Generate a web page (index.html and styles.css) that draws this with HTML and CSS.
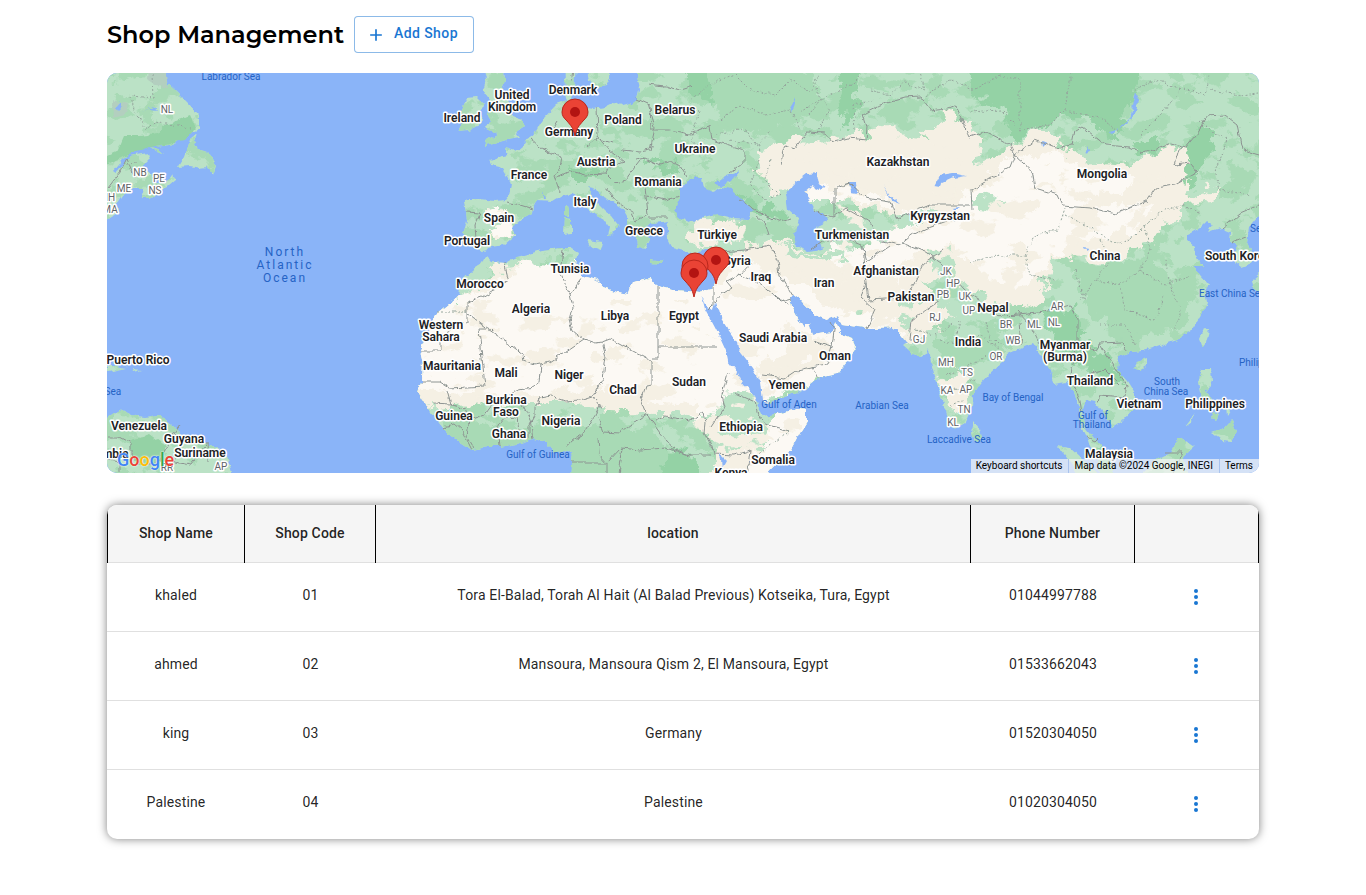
FILE: index.html
```html
<!DOCTYPE html>
<html lang="en">
<head>
<meta charset="utf-8">
<meta name="viewport" content="width=device-width, initial-scale=1">
<title>Shop Management</title>
<link rel="stylesheet" href="styles.css">
</head>
<body>
<main class="page">
  <header class="toolbar">
    <h1 class="title">Shop Management</h1>
    <button class="add-button" type="button">
      <svg class="add-icon" viewBox="0 0 24 24" aria-hidden="true"><path d="M19 13h-6v6h-2v-6H5v-2h6V5h2v6h6v2z"/></svg>
      <span class="add-label">Add Shop</span>
    </button>
  </header>

  <section class="map" aria-label="Map of shops">
    <svg class="map-canvas" viewBox="107 73 1152 400" preserveAspectRatio="xMidYMid slice">
      <defs>
        <filter id="coast" filterUnits="userSpaceOnUse" x="97" y="63" width="1172" height="420">
          <feTurbulence type="fractalNoise" baseFrequency="0.12" numOctaves="3" seed="4" result="n"/>
          <feDisplacementMap in="SourceGraphic" in2="n" scale="6" xChannelSelector="R" yChannelSelector="G"/>
        </filter>
        <filter id="rough" filterUnits="userSpaceOnUse" x="97" y="63" width="1172" height="420">
          <feTurbulence type="fractalNoise" baseFrequency="0.07" numOctaves="4" seed="9" result="n"/>
          <feDisplacementMap in="SourceGraphic" in2="n" scale="24" xChannelSelector="R" yChannelSelector="G"/>
        </filter>
        <filter id="woods" filterUnits="userSpaceOnUse" x="97" y="63" width="1172" height="420" color-interpolation-filters="sRGB">
          <feTurbulence type="fractalNoise" baseFrequency="0.035 0.05" numOctaves="5" seed="21"/>
          <feColorMatrix values="0 0 0 0 0  0 0 0 0 0  0 0 0 0 0  24 0 0 0 -12.4" result="m"/>
          <feComposite in="SourceGraphic" in2="m" operator="in"/>
        </filter>
        <filter id="steppe" filterUnits="userSpaceOnUse" x="97" y="63" width="1172" height="420" color-interpolation-filters="sRGB">
          <feTurbulence type="fractalNoise" baseFrequency="0.03 0.06" numOctaves="4" seed="7"/>
          <feColorMatrix values="0 0 0 0 0  0 0 0 0 0  0 0 0 0 0  0 24 0 0 -13.8" result="m"/>
          <feComposite in="SourceGraphic" in2="m" operator="in"/>
        </filter>
        <path id="mainland" d="M565 60L566 80 565 93 567 101 556 105 545 117 540 124 535 133 527 138 522 146 516 151 505 148 507 155 498 157 490 160 492 165 503 168 509 178 511 185 509 196 506 200 495 201 480 199 467 199 464 203 466 212 467 220 463 235 465 243 477 247 484 252 487 248 504 245 511 239 515 235 511 228 522 219 533 213 534 206 538 200 552 201 562 195 572 193 580 202 588 210 597 216 604 220 610 228 608 236 612 235 615 228 619 226 612 217 605 211 597 203 592 193 587 187 595 189 607 199 623 209 627 216 627 225 635 235 638 247 647 248 650 239 645 228 650 223 663 222 668 221 666 226 668 238 673 248 687 252 697 254 706 249 713 249 718 256 716 272 716 283 711 289 700 292 687 291 673 290 658 286 647 278 633 282 629 294 617 292 603 287 597 280 582 276 582 268 575 263 578 253 570 248 563 248 543 250 517 257 507 263 490 262 485 257 480 265 472 270 460 283 458 295 447 305 437 313 430 327 420 350 423 363 422 382 418 392 425 403 433 415 442 427 452 437 472 450 487 447 500 447 520 443 533 439 547 442 553 452 563 451 572 453 571 463 570 490 758 490 770 470 780 460 790 452 800 433 807 422 807 410 797 409 777 414 763 416 757 406 762 401 770 402 790 395 807 388 820 378 837 374 847 362 856 347 852 338 840 333 836 323 832 332 820 334 812 335 809 323 805 323 804 328 798 318 792 307 790 298 797 296 805 305 815 315 827 320 837 316 842 325 857 327 873 328 893 327 900 333 907 342 903 345 913 354 920 356 927 352 929 348 931 363 937 383 943 403 948 417 955 429 965 423 972 407 973 395 980 384 987 376 1003 361 1007 354 1020 349 1033 344 1042 357 1050 370 1053 384 1067 382 1073 390 1080 407 1080 423 1087 437 1090 447 1098 460 1100 490 1115 490 1112 462 1103 447 1093 437 1085 427 1082 412 1086 400 1095 402 1103 413 1112 427 1123 420 1135 407 1135 393 1127 380 1117 369 1118 358 1130 352 1142 351 1157 347 1177 340 1192 330 1200 317 1207 303 1205 292 1209 285 1200 275 1194 266 1203 266 1196 257 1195 247 1187 240 1187 235 1200 228 1207 221 1213 225 1209 232 1220 228 1230 232 1229 241 1237 244 1235 262 1241 267 1252 263 1252 255 1247 242 1249 228 1262 212 1280 200 1280 60 641 60 637 75 640 90 638 99 633 103 622 106 615 102 605 107 593 109 583 107 575 103 571 98 574 86 577 60Z"/>
        <g id="islands">
          <path d="M482 60L486 80 483 90 490 100 495 108 487 114 490 122 486 129 497 134 487 140 485 146 497 143 507 140 520 138 516 133 525 127 522 120 513 117 509 104 502 92 505 78 502 60Z"/>
          <path d="M467 98L477 97 483 103 482 112 480 124 468 130 458 131 463 122 459 116 463 108Z"/>
          <path d="M586 60L590 80 595 88 606 86 610 77 611 60Z"/>
          <path d="M565 205L569 208 569 216 565 215ZM565 218L571 219 571 233 564 234ZM587 240L603 242 601 250 590 246ZM650 260L664 262 662 264 651 263ZM700 263L710 260 705 266Z"/>
          <path d="M973 420L979 428 981 439 974 441 971 432Z"/>
          <path d="M1204 328L1209 330 1206 342 1202 347 1199 339ZM1137 362L1146 359 1146 366 1140 370 1134 367Z"/>
          <path d="M1202 369L1211 369 1212 380 1206 394 1216 402 1222 408 1212 406 1201 398 1198 382ZM1226 403L1230 411 1227 416ZM1214 412L1220 414 1216 421 1212 418ZM1212 433L1224 429 1232 420 1236 432 1231 442 1223 441ZM1185 427L1196 413 1192 422Z"/>
          <path d="M1143 473L1158 458 1170 452 1180 437 1194 447 1183 457 1190 480 1143 480ZM1058 446L1070 448 1083 460 1100 480 1080 480 1070 462Z"/>
          <path d="M1252 280L1262 271 1262 292 1254 290ZM1236 263L1250 262 1245 266Z"/>
          <path d="M97 60L163 60 167 83 177 92 188 103 199 115 199 130 188 134 177 142 163 145 138 147 126 156 113 172 116 174 130 156 148 153 150 160 143 167 152 174 155 183 165 184 172 174 175 180 163 190 150 198 142 198 145 188 133 188 122 196 117 204 118 212 107 219 97 219ZM198 133L190 140 184 157 178 167 190 166 200 168 207 167 213 175 216 166 208 152 200 150 194 145ZM150 147L158 149 165 154 158 152Z"/>
          <path d="M97 425L110 416 120 410 130 415 145 417 160 415 172 425 182 435 200 443 217 447 228 458 234 480 97 480ZM107 366L116 366 127 368 112 371 107 372ZM133 369L142 370 134 372Z"/>
        </g>
        <clipPath id="land"><use href="#mainland"/></clipPath>
      </defs>

      <rect class="sea" x="97" y="63" width="1172" height="420"/>
      <g filter="url(#coast)">
        <use href="#mainland" class="green"/>
        <use href="#islands" class="green"/>
        <g clip-path="url(#land)">
          <g filter="url(#woods)">
            <path class="green-mid" d="M97 63H1270V480H97Z"/>
          </g>
          <g filter="url(#rough)">
            <path class="green-deep" d="M680 60L690 90 720 110 735 95 760 85 790 75 800 60ZM845 60L838 95 842 130 852 120 862 75 870 60ZM960 60L975 95 1000 105 1015 140 1050 125 1080 115 1115 140 1130 105 1140 60ZM1040 310L1075 305 1080 340 1110 360 1125 385 1105 380 1075 360 1055 340ZM1195 125L1215 135 1205 160 1190 185 1175 190ZM570 165L600 170 595 180 570 180ZM640 155L680 165 675 175 655 168ZM735 195L790 215 785 222 745 210ZM1070 455L1130 450 1130 475 1090 475ZM620 455L690 450 700 480 600 480ZM1130 138L1160 140 1155 155 1135 152Z"/>
            <path class="green-mid" d="M700 60L800 62 830 110 780 130 720 125ZM1070 265L1150 260 1195 300 1180 330 1120 335 1090 310ZM440 410L500 425 560 425 660 430 670 480 440 480ZM935 335L960 340 1000 330 1010 345 960 375 940 365Z"/>
            <path class="beige" d="M757 172L762 152 790 140 835 142 857 128 862 142 880 122 900 136 925 138 945 112 970 125 982 145 975 155 985 165 1012 145 1040 132 1055 132 1058 145 1075 154 1110 166 1150 158 1180 145 1194 158 1185 172 1188 195 1222 185 1212 206 1180 207 1160 235 1140 250 1110 262 1080 256 1060 258 1042 280 1048 300 1025 310 1000 306 985 298 962 285 952 268 930 275 920 300 950 310 955 320 935 330 905 345 880 345 700 480 745 480 800 480 830 440 880 380 860 300 850 330 700 415 640 412 560 404 500 404 410 410 410 300 455 305 480 285 500 268 570 262 600 270 700 285 718 262 735 252 770 238 800 252 850 250 880 250 905 245 915 232 900 215 860 205 800 190 780 195Z"/>
          </g>
          <g filter="url(#rough)">
            <path class="sand" d="M410 390L410 290 460 300 500 278 540 260 600 265 720 284 745 262 780 275 850 310 900 320 905 300 890 270 830 265 830 240 850 250 890 238 900 215 870 200 800 200 810 182 860 190 900 205 950 212 985 178 1020 155 1050 185 1100 205 1150 203 1130 230 1080 240 1050 260 1020 290 980 270 955 250 925 245 900 270 900 330 860 370 700 420 660 405 600 385 500 395ZM680 480L740 470 790 400 820 410 800 480ZM1005 160L1060 150 1090 175 1140 180 1120 195 1060 190Z"/>
            <path class="beige" d="M780 325L810 335 840 350 815 360 765 385 755 370 790 350ZM780 235L830 262 860 300 850 315 820 300 790 270ZM690 222L745 225 740 240 700 245 688 236ZM485 208L508 212 510 236 495 236 500 222 485 220ZM720 430L760 430 740 480 715 480ZM937 382L960 370 968 395 955 412 945 395ZM1190 200L1220 186 1215 202ZM640 400L700 405 700 415 640 412Z"/>
            <path class="sand" d="M488 208L500 207 500 220 512 224 504 236 492 232 498 222Z"/>
            <path class="green" d="M480 258L495 262 485 278 472 285 466 282ZM722 395L750 392 768 415 765 440 735 455 705 435ZM783 240L812 255 845 252 850 258 810 262 788 252ZM900 300L912 300 912 320 905 330 902 315ZM890 218L935 208 930 218 900 232ZM925 245L945 250 960 280 935 275ZM525 250L578 247 560 256 530 257ZM975 195L1005 202 1000 210 975 206Z"/>
          </g>
          <g filter="url(#steppe)">
            <path class="beige" d="M775 155L940 140 1000 175 1060 160 1170 170 1130 235 1050 250 1010 290 960 255 900 335H700V300H420V400H690V450H800V300H720L750 260 830 270 830 200Z"/>
          </g>
        </g>
        <g filter="url(#woods)"><use href="#islands" class="green-mid"/></g>
        <g class="green-deep">
          <path d="M107 165L125 156 150 147 185 140 196 128 190 115 165 125 158 134 140 136 124 136 118 150 107 155ZM130 440L150 434 165 445 160 465 140 465 131 455Z"/>
        </g>
        <path class="tundra" d="M150 60L164 60 168 88 157 86 148 80ZM112 100L128 104 125 115 113 118Z"/>
        <g class="sea">
          <path d="M690 178L702 178 704 187 712 191 722 187 731 189 743 200 753 210 748 219 733 218 717 214 703 217 690 222 679 217 675 211 680 199 680 190 687 182ZM713 183L727 175 739 171 731 181 722 186Z"/>
          <path d="M786 195L792 185 806 174 817 173 819 183 827 188 820 190 812 186 804 193 811 203 816 212 824 212 827 221 817 226 823 250 808 252 796 245 794 233 800 220 788 209Z"/>
          <path d="M702 297L708 308 713 311 715 301 719 315 727 328 737 342 738 350 752 368 760 382 762 400 764 406 757 403 755 395 743 385 738 373 728 360 726 350 720 337 712 322 705 309Z"/>
          <path d="M849 182L856 182 857 193 851 192ZM934 187L940 175 952 173 966 176 950 179 941 183 940 188ZM1108 131L1120 128 1130 118 1136 92 1140 95 1135 114 1124 126 1112 133ZM952 208L960 207 955 211ZM1086 146L1089 150 1087 156ZM1042 141L1047 143 1043 147ZM1083 248L1089 249 1088 252ZM883 185L890 195 900 203 892 200ZM790 108L797 96 792 114ZM115 108L121 101 122 107 117 112ZM143 112L154 106 157 110 149 109ZM543 191L545 198 543 198Z"/>
          <path d="M720 455L726 461 722 468Z"/>
        </g>
      </g>

      <g class="borders" filter="url(#coast)">
        <path d="M505 262L507 275 509 280 495 289 482 297 467 302 467 314 523 354 524 361 535 365 550 362 584 339 573 331 570 320 573 308 570 294 560 273 563 250M467 314V322L441 335V351H420M487 329H479L485 386 450 388 440 382 422 382M541 364L539 382 535 387 518 389 505 398 495 400 489 408M535 407L540 398 550 396 565 401 580 400 593 396 603 378 606 357 602 342 596 343 584 339M582 278L573 290 570 294M602 342L610 339 652 362V385L646 386 641 402 645 412 660 433 673 448 690 455 710 455M658 286V358H652M658 347H718"/>
        <path d="M447 391L451 405 466 409 470 420 484 415 489 408M433 404L451 405M442 427L455 424 462 430 472 450M470 420L467 436 474 448M500 447L498 425 505 417 518 418 522 440M528 439V428L535 415 535 407M522 403L530 420 533 439M566 448L572 441 582 435 597 412 600 405 594 397M598 418L603 432 620 433 647 413M598 437L599 454 607 463 621 448 640 450 665 448 691 455M571 463H607V473M622 448L617 480M655 420L665 416 690 421 703 412 705 423 704 432 711 445 713 454 735 455 750 450M728 373L722 395 725 407 711 428M735 393L755 402 758 414 765 424 789 431M750 450L748 466 752 480M762 375L785 378 797 370 826 364 831 347 813 341M812 366L818 379M715 302L722 294 732 288 727 282 740 275 752 262M738 275L760 284 774 296 790 305M775 296L781 302 791 299M713 287V305L708 310M832 347L834 330 830 322"/>
        <path d="M507 202L520 205 533 209M466 212L480 213 475 225 476 240M530 138L540 147 551 153 562 156 560 168 554 176 560 192M555 178L570 171 585 175 605 174 609 167 625 162 610 150 598 136 597 108M587 146L597 138 612 143M622 150L640 152 650 150 655 128 648 103M648 84L665 86 680 90 693 86M637 99L650 105 651 130M651 130L670 130 690 134 710 126 712 140 728 145 744 150 744 162 730 172M635 160L645 158 660 165 670 161 680 166 686 176M608 176L615 183 625 180 640 161M605 187L618 203 624 207 635 214M647 196L665 200 680 196M644 180L646 196 648 215 635 222 631 213M648 217H668M572 82L574 70M558 120L550 133"/>
        <path d="M781 165L783 150 786 145 795 148 807 132 825 133 833 142 848 138 866 140 867 127 863 114 880 105 905 98 920 97 930 110 948 108 955 105 970 137 985 132 1010 145 1015 155 1035 140 1055 148 1072 145 1075 130 1082 126 1105 145 1130 147 1142 153 1160 148 1170 144 1185 148 1200 130 1205 116 1225 115 1238 125 1243 150 1260 155M1015 155L1032 170 1035 188 1058 195 1063 206 1090 208 1115 214 1147 200 1155 188 1175 185 1198 172 1190 163 1175 165 1180 148M1015 155L1010 168 988 180 972 190 973 210M835 188L850 183 866 198 890 202 897 220 910 213 930 205 970 205M815 210L824 215 834 217V188M834 217L846 208 870 222 878 240 900 245 912 235 930 227 950 220 970 215M810 250L825 240 850 240 862 245 867 262 890 246M863 245L866 283 868 300 905 298 915 283 925 262 943 250M866 283L862 298 875 310 867 328M769 235L766 225 755 215M740 200L765 215 778 222 790 218M720 252L745 250 769 245 778 260 780 275 793 297M902 243L925 252 940 262 965 290 980 300 1000 316 1020 315 1045 312 1070 305 1078 320 1078 345M1018 312L1030 325 1040 345M1022 345L1020 322M1078 345L1072 363 1070 375 1080 400 1082 412M1078 345L1095 350 1100 343 1122 342 1125 350M1100 345L1110 360 1120 375 1127 385 1125 397 1100 395 1098 402M1088 375L1105 370 1120 385M1087 437L1095 441 1098 438M1222 228L1240 213 1259 205M1230 243L1246 237M910 340L912 320 925 310 940 300M1164 452H1182L1172 480"/>
        <path d="M108 188L120 172 127 158 132 170 134 178M107 437L120 437 131 443 131 455 145 465 160 460 170 440 180 425M107 460L120 462 120 473M180 445L175 462 190 465 207 442 208 462"/>
      </g>
      <g class="regions" filter="url(#coast)">
        <path d="M153 73L154 98 131 96 134 110 147 130 155 122 190 128M437 312H467M756 456L789 431M127 163L138 162"/>
        <path d="M690 100L710 85 735 75 750 90 775 95 790 80 810 92 820 75M720 120L740 105 765 115 790 110 800 130M760 150L745 130 715 135M770 160L765 180 780 195 765 200 750 185 760 160M815 88L830 110 815 135M820 100L850 85 860 75M870 90L890 95 905 82 925 90 920 73M855 130L853 105 875 100M925 95L950 80 975 90 1000 75 1020 80 1020 130 1000 110 970 112M1020 130L1050 125 1065 110 1100 118 1120 132M1065 110L1068 90 1072 73M1135 90L1155 80 1180 88 1165 110 1140 135M1180 88L1205 95 1210 75M1210 90L1240 95 1259 93M1200 120L1215 135 1228 140 1215 170 1220 190 1250 195M700 110L690 140 705 150M730 140L760 145 770 130M800 112L820 100 810 115"/>
        <path d="M970 262L1000 255 1025 255 1035 235 1058 230 1065 208M1025 255L1030 275 1055 280M1065 215L1085 225 1100 235 1120 245 1135 235 1145 225M1100 240L1110 262 1095 280 1080 300M1145 225L1150 250 1140 270 1120 285 1095 280M1145 225L1165 210 1185 205 1200 215M1140 270L1165 285 1190 275M1120 285L1125 310 1155 320 1165 295M1100 325L1125 325 1135 345M1165 260L1170 285 1180 310 1175 330M1075 270L1085 300M940 340L960 345 980 335 1000 350M945 375L960 370 990 355M945 395L965 385 975 380M960 320L955 345M985 320L990 340 1005 345M915 330L935 335 955 322M950 405L965 400"/>
      </g>

      <g class="places">
        <text x="512" y="99">United</text><text x="512" y="111">Kingdom</text>
        <text x="573" y="94">Denmark</text><text x="462" y="122">Ireland</text><text x="623" y="124">Poland</text><text x="675" y="114">Belarus</text><text x="569" y="136">Germany</text><text x="695" y="153">Ukraine</text><text x="596" y="166">Austria</text><text x="529" y="179">France</text><text x="658" y="186">Romania</text><text x="585" y="206">Italy</text><text x="499" y="222">Spain</text><text x="467" y="245">Portugal</text><text x="644" y="235">Greece</text><text x="717" y="239">Türkiye</text><text x="570" y="273">Tunisia</text><text x="480" y="288">Morocco</text><text x="531" y="313">Algeria</text><text x="615" y="320">Libya</text><text x="684" y="320">Egypt</text>
        <text x="441" y="329">Western</text><text x="441" y="341">Sahara</text><text x="452" y="370">Mauritania</text><text x="506" y="377">Mali</text><text x="569" y="379">Niger</text><text x="623" y="394">Chad</text><text x="689" y="386">Sudan</text><text x="506" y="404">Burkina</text><text x="506" y="416">Faso</text><text x="454" y="420">Guinea</text><text x="561" y="425">Nigeria</text><text x="509" y="438">Ghana</text><text x="741" y="431">Ethiopia</text><text x="773" y="464">Somalia</text><text x="731" y="477">Kenya</text><text x="787" y="389">Yemen</text><text x="835" y="360">Oman</text><text x="773" y="342">Saudi Arabia</text><text x="761" y="281">Iraq</text><text x="737" y="265">Syria</text><text x="824" y="287">Iran</text>
        <text x="898" y="166">Kazakhstan</text><text x="940" y="220">Kyrgyzstan</text><text x="852" y="239">Turkmenistan</text><text x="886" y="275">Afghanistan</text><text x="911" y="301">Pakistan</text><text x="993" y="312">Nepal</text><text x="968" y="346">India</text><text x="1102" y="178">Mongolia</text><text x="1105" y="260">China</text><text class="start" x="1205" y="260">South Korea</text><text x="1065" y="349">Myanmar</text><text x="1065" y="361">(Burma)</text><text x="1090" y="385">Thailand</text><text x="1139" y="408">Vietnam</text><text x="1215" y="408">Philippines</text><text x="1109" y="458">Malaysia</text>
        <text x="138" y="364">Puerto Rico</text><text x="139" y="430">Venezuela</text><text x="184" y="443">Guyana</text><text x="200" y="457">Suriname</text><text x="103" y="458">Colombia</text>
      </g>
      <g class="states">
        <text x="167" y="113">NL</text><text x="140" y="176">NB</text><text x="159" y="182">PE</text><text x="155" y="194">NS</text><text x="124" y="192">ME</text><text x="108" y="201">NH</text><text x="110" y="213">MA</text><text x="167" y="471">RR</text><text x="221" y="470">AP</text>
        <text x="946" y="275">JK</text><text x="953" y="287">HP</text><text x="943" y="298">PB</text><text x="965" y="300">UK</text><text x="969" y="314">UP</text><text x="935" y="321">RJ</text><text x="919" y="343">GJ</text><text x="946" y="366">MH</text><text x="967" y="376">TS</text><text x="947" y="394">KA</text><text x="966" y="393">AP</text><text x="964" y="413">TN</text><text x="953" y="426">KL</text><text x="1057" y="310">AR</text><text x="1006" y="328">BR</text><text x="1034" y="328">ML</text><text x="1054" y="326">NL</text><text x="1013" y="344">WB</text><text x="996" y="360">OR</text>
      </g>
      <g class="waters">
        <text x="231" y="80">Labrador Sea</text><text class="start" x="1250" y="232">Sea of Japan</text><text class="start" x="1199" y="297">East China Sea</text><text class="start" x="1239" y="366">Philippine Sea</text><text x="1167" y="385">South</text><text x="1166" y="395">China Sea</text><text x="1013" y="401">Bay of Bengal</text><text x="1093" y="419">Gulf of</text><text x="1092" y="428">Thailand</text><text x="959" y="443">Laccadive Sea</text><text x="882" y="409">Arabian Sea</text><text x="789" y="408">Gulf of Aden</text><text x="538" y="458">Gulf of Guinea</text><text x="89" y="395">Caribbean Sea</text>
      </g>
      <g class="ocean"><text x="285" y="256">North</text><text x="285" y="269">Atlantic</text><text x="285" y="282">Ocean</text></g>

      <defs><g id="pin"><path class="pin-body" d="M0 0C-2 -9 -4 -10 -8 -15C-11 -18 -13 -20 -13 -24A13 13 0 0 1 13 -24C13 -20 11 -18 8 -15C4 -10 2 -9 0 0Z"/><circle class="pin-dot" cy="-24" r="5"/></g></defs>
      <use href="#pin" x="575" y="136"/>
      <use href="#pin" x="716" y="284"/>
      <use href="#pin" x="695" y="290"/>
      <use href="#pin" x="694" y="297"/>
    </svg>
    <div class="map-logo"><span class="blue">G</span><span class="red">o</span><span class="yellow">o</span><span class="blue">g</span><span class="lime">l</span><span class="red">e</span></div>
    <div class="map-legal">
      <button class="legal-item" type="button">Keyboard shortcuts</button>
      <span class="legal-item">Map data ©2024 Google, INEGI</span>
      <a class="legal-item" href="#terms">Terms</a>
    </div>
  </section>

  <div class="table-card">
    <table class="shops">
      <colgroup><col class="col-name"><col class="col-code"><col><col class="col-phone"><col class="col-actions"></colgroup>
      <thead>
        <tr><th scope="col">Shop Name</th><th scope="col">Shop Code</th><th scope="col">location</th><th scope="col">Phone Number</th><th scope="col" aria-label="Actions"></th></tr>
      </thead>
      <tbody>
        <tr><td>khaled</td><td>01</td><td>Tora El-Balad, Torah Al Hait (Al Balad Previous) Kotseika, Tura, Egypt</td><td>01044997788</td><td class="actions"><button class="more" type="button" aria-label="Actions for khaled"><svg viewBox="0 0 24 24"><circle cx="12" cy="6" r="2"/><circle cx="12" cy="12" r="2"/><circle cx="12" cy="18" r="2"/></svg></button></td></tr>
        <tr><td>ahmed</td><td>02</td><td>Mansoura, Mansoura Qism 2, El Mansoura, Egypt</td><td>01533662043</td><td class="actions"><button class="more" type="button" aria-label="Actions for ahmed"><svg viewBox="0 0 24 24"><circle cx="12" cy="6" r="2"/><circle cx="12" cy="12" r="2"/><circle cx="12" cy="18" r="2"/></svg></button></td></tr>
        <tr><td>king</td><td>03</td><td>Germany</td><td>01520304050</td><td class="actions"><button class="more" type="button" aria-label="Actions for king"><svg viewBox="0 0 24 24"><circle cx="12" cy="6" r="2"/><circle cx="12" cy="12" r="2"/><circle cx="12" cy="18" r="2"/></svg></button></td></tr>
        <tr><td>Palestine</td><td>04</td><td>Palestine</td><td>01020304050</td><td class="actions"><button class="more" type="button" aria-label="Actions for Palestine"><svg viewBox="0 0 24 24"><circle cx="12" cy="6" r="2"/><circle cx="12" cy="12" r="2"/><circle cx="12" cy="18" r="2"/></svg></button></td></tr>
      </tbody>
    </table>
  </div>
</main>
</body>
</html>
```
FILE: styles.css
```css
* { box-sizing: border-box; }

body {
  margin: 0;
  background: #fff;
  color: rgba(0, 0, 0, 0.87);
  font-family: Roboto, "Liberation Sans", sans-serif;
  font-size: 14px;
}

.page {
  max-width: 1200px;
  margin: 0 auto;
  padding: 16px 24px;
}

.toolbar {
  display: flex;
  align-items: center;
  gap: 10px;
  margin-bottom: 20px;
}

.title {
  margin: 0;
  color: #000;
  font-family: Montserrat, Inter, sans-serif;
  font-size: 24px;
  font-weight: 600;
  line-height: 37px;
}

.add-button {
  display: flex;
  align-items: center;
  gap: 8px;
  height: 37px;
  padding: 0 15px 0 11px;
  border: 1px solid rgba(25, 118, 210, 0.5);
  border-radius: 4px;
  background: #fff;
  color: #1976d2;
  font: 500 14px/24px Roboto, sans-serif;
  letter-spacing: 0.02857em;
  cursor: pointer;
}

.add-icon { width: 20px; height: 20px; fill: currentColor; }
.add-label { padding-bottom: 3px; }

.map {
  position: relative;
  height: 400px;
  overflow: hidden;
  border-radius: 10px;
  background: #8ab4f8;
}

.map-canvas { display: block; width: 100%; height: 100%; }

.sea { fill: #8ab4f8; }
.green { fill: #bbe2c6; }
.green-mid { fill: #a8dab5; }
.green-deep { fill: #94d2a5; }
.beige { fill: #f5f0e4; }
.sand { fill: #fcf9f4; }
.tundra { fill: #b3cfbf; }

.borders { fill: none; stroke: #8d9492; stroke-width: 1px; }
.regions { fill: none; stroke: #94a59c; stroke-width: 1px; stroke-dasharray: 2 2; }

.places, .states, .waters, .ocean { text-anchor: middle; stroke-linejoin: round; paint-order: stroke; }
.places { font-size: 12px; font-weight: 600; fill: #202124; stroke: #fff; stroke-width: 3px; }
.states { font-size: 10px; fill: #5f6368; stroke: #fff; stroke-width: 3px; }
.waters { font-size: 10px; fill: #2563c5; }
.ocean { font-size: 12px; letter-spacing: 2px; fill: #2563c5; }
.start { text-anchor: start; }

.pin-body { fill: #ea4335; stroke: #b9271c; stroke-width: 1px; }
.pin-dot { fill: #b31412; }

.map-logo {
  position: absolute;
  left: 10px;
  bottom: 3px;
  font-size: 18px;
  font-weight: 500;
  line-height: 20px;
  text-shadow: 0 0 1px #fff, 0 0 2px #fff;
}

.blue { color: #4285f4; }
.red { color: #ea4335; }
.yellow { color: #fbbc05; }
.lime { color: #34a853; }

.map-legal {
  position: absolute;
  right: 0;
  bottom: 0;
  display: flex;
  background: rgba(245, 245, 245, 0.7);
  font-size: 10px;
  line-height: 14px;
}

.legal-item {
  padding: 0 6px 0 5px;
  border: 0;
  background: none;
  color: #000;
  font: inherit;
  text-decoration: none;
}

.legal-item + .legal-item { border-left: 1px solid #a9c3ee; }

.table-card {
  margin-top: 32px;
  overflow: hidden;
  border-radius: 10px;
  box-shadow: 0 0 10px rgba(0, 0, 0, 0.5);
}

.shops {
  width: 100%;
  border-spacing: 0;
  table-layout: fixed;
  text-align: center;
  line-height: 20px;
  letter-spacing: 0.01071em;
}

.col-name { width: 138px; }
.col-code { width: 131px; }
.col-phone { width: 164px; }
.col-actions { width: 124px; }

.shops th {
  height: 58px;
  padding: 16px 16px 18px;
  border-right: 1px solid #000;
  background: #f5f5f5;
  font-weight: 500;
  box-shadow: inset 0 -1px #e0e0e0;
}

.shops th:first-child { border-left: 1px solid #000; }

.shops td {
  height: 69px;
  padding: 16px 16px 20px;
  border-bottom: 1px solid #e0e0e0;
}

.shops tbody tr:last-child td { border-bottom-color: transparent; }

.shops .actions { padding: 16px 18px 16px 16px; }

.more {
  display: block;
  width: 36px;
  height: 36px;
  margin: 0 auto;
  padding: 6px;
  border: 0;
  border-radius: 50%;
  background: none;
  cursor: pointer;
}

.more svg { display: block; width: 24px; height: 24px; fill: #1976d2; }
```
